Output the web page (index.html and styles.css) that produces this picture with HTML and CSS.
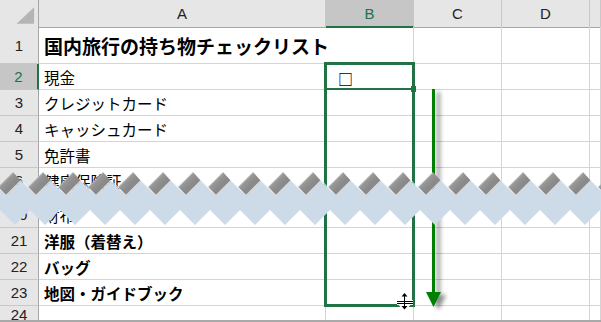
FILE: index.html
```html
<!DOCTYPE html>
<html lang="ja">
<head>
    <meta charset="UTF-8">
    <meta name="viewport" content="width=device-width, initial-scale=1.0">
    <title>国内旅行の持ち物チェックリスト</title>
    <link rel="stylesheet" href="styles.css">
</head>
<body>

    <!-- シート本体 -->
    <div class="sheet">
        <div class="row head">
            <div class="corner">
                <svg width="39" height="27" viewBox="0 0 39 27"><polygon points="35,7 35,24 17,24" fill="#b4b4b4"/></svg>
            </div>
            <div class="colhead">A</div>
            <div class="colhead sel">B</div>
            <div class="colhead">C</div>
            <div class="colhead">D</div>
            <div class="colhead"></div>
        </div>

        <div class="row r1">
            <div class="num">1</div>
            <div class="cell title">国内旅行の持ち物チェックリスト</div>
            <div class="cell"></div><div class="cell"></div><div class="cell"></div><div class="cell"></div>
        </div>
        <div class="row">
            <div class="num sel">2</div>
            <div class="cell">現金</div>
            <div class="cell check">□</div><div class="cell"></div><div class="cell"></div><div class="cell"></div>
        </div>
        <div class="row">
            <div class="num">3</div>
            <div class="cell">クレジットカード</div>
            <div class="cell"></div><div class="cell"></div><div class="cell"></div><div class="cell"></div>
        </div>
        <div class="row">
            <div class="num">4</div>
            <div class="cell">キャッシュカード</div>
            <div class="cell"></div><div class="cell"></div><div class="cell"></div><div class="cell"></div>
        </div>
        <div class="row">
            <div class="num">5</div>
            <div class="cell">免許書</div>
            <div class="cell"></div><div class="cell"></div><div class="cell"></div><div class="cell"></div>
        </div>
        <div class="row">
            <div class="num">6</div>
            <div class="cell">健康保険証</div>
            <div class="cell"></div><div class="cell"></div><div class="cell"></div><div class="cell"></div>
        </div>
        <div class="skip"></div>
        <div class="row">
            <div class="num">20</div>
            <div class="cell">財布</div>
            <div class="cell"></div><div class="cell"></div><div class="cell"></div><div class="cell"></div>
        </div>
        <div class="row bold">
            <div class="num">21</div>
            <div class="cell">洋服（着替え）</div>
            <div class="cell"></div><div class="cell"></div><div class="cell"></div><div class="cell"></div>
        </div>
        <div class="row bold">
            <div class="num">22</div>
            <div class="cell">バッグ</div>
            <div class="cell"></div><div class="cell"></div><div class="cell"></div><div class="cell"></div>
        </div>
        <div class="row bold">
            <div class="num">23</div>
            <div class="cell">地図・ガイドブック</div>
            <div class="cell"></div><div class="cell"></div><div class="cell"></div><div class="cell"></div>
        </div>
        <div class="row last">
            <div class="num">24</div>
            <div class="cell"></div>
            <div class="cell"></div><div class="cell"></div><div class="cell"></div><div class="cell"></div>
        </div>

        <!-- 選択範囲 B2:B23 -->
        <div class="selection"></div>
        <div class="active-line"></div>
        <div class="fill-handle"></div>

        <!-- 下向きの矢印 -->
        <svg class="arrow" width="40" height="230" viewBox="420 85 40 230">
            <defs>
                <filter id="shadow" x="-50%" y="-5%" width="200%" height="110%">
                    <feDropShadow dx="5" dy="3" stdDeviation="2" flood-color="#000" flood-opacity="0.45"/>
                </filter>
            </defs>
            <g filter="url(#shadow)" fill="#008000">
                <rect x="432" y="89" width="3" height="204"/>
                <polygon points="426,292 441,292 433.5,307"/>
            </g>
        </svg>

        <!-- マウスカーソル -->
        <svg class="cursor" width="18" height="18" viewBox="396 292 18 18">
            <g stroke="#fff" stroke-width="3" fill="#fff">
                <path d="M397 301.5H413M397 303.5H413M404.5 295V307"/>
                <polygon points="404.5,293 401.5,296.5 407.5,296.5"/>
                <polygon points="404.5,309.5 401.5,306 407.5,306"/>
            </g>
            <g stroke="#000" stroke-width="1" fill="#000">
                <path d="M397 301.5H413M397 303.5H413M404.5 295V307" fill="none"/>
                <polygon points="404.5,293 401.5,296.5 407.5,296.5" stroke="none"/>
                <polygon points="404.5,309.5 401.5,306 407.5,306" stroke="none"/>
            </g>
        </svg>

        <!-- 省略部分のギザギザ -->
        <svg class="tear" width="601" height="65" viewBox="0 165 601 65">
            <defs>
                <linearGradient id="tooth" gradientUnits="userSpaceOnUse" x1="12" y1="15" x2="20.5" y2="23.5">
                    <stop offset="0" stop-color="#b8b8b8"/>
                    <stop offset="0.15" stop-color="#979797"/>
                    <stop offset="0.7" stop-color="#888888"/>
                    <stop offset="1" stop-color="#8e8e8e"/>
                </linearGradient>
                <pattern id="zigzag" patternUnits="userSpaceOnUse" x="-7" y="165" width="30" height="65">
                    <polygon points="5,22 20,7 28,16 13,31" fill="url(#tooth)"/>
                    <polyline points="0,17.4 13,30.4 28,15.4 30,17.4" fill="none" stroke="#f2f2f2" stroke-width="1"/>
                    <polygon points="0,18 13,31 28,16 30,18 30,52 22,60 7,45 0,52" fill="#cddbe8"/>
                </pattern>
            </defs>
            <rect x="0" y="165" width="601" height="65" fill="url(#zigzag)"/>
        </svg>
    </div>

</body>
</html>
```

FILE: styles.css
```css
body {
    margin: 0;
    background-color: #ffffff;
    font-family: "Noto Sans CJK JP", sans-serif;
}
.sheet {
    position: relative;
    width: 601px;
    height: 322px;
    overflow: hidden;
    border-bottom: 2px solid #a9a9a9;
    box-sizing: border-box;
}
.row {
    display: grid;
    grid-template-columns: 39px 287px 88px 88px 88px 11px;
    height: 26px;
}
.row > div {
    box-sizing: border-box;
    white-space: nowrap;
    display: flex;
    align-items: center;
}
.head {
    height: 27px;
    background-color: #e6e6e6;
}
.r1 {
    height: 37px;
}
.last {
    height: 14px;
}
.skip {
    height: 8px;
}

/* 見出し */
.corner {
    border-right: 1px solid #a5a5a5;
    border-bottom: 1px solid #a5a5a5;
}
.colhead {
    justify-content: center;
    font-family: "Liberation Sans", sans-serif;
    font-size: 15px;
    color: #222;
    border-right: 1px solid #c8c8c8;
    border-bottom: 1px solid #a5a5a5;
}
.colhead.sel {
    background-color: #c6c6c6;
    color: #217346;
    border-bottom: 2px solid #217346;
}
.num {
    justify-content: center;
    background-color: #e6e6e6;
    font-family: "Liberation Sans", sans-serif;
    font-size: 15px;
    color: #222;
    border-right: 1px solid #a5a5a5;
    border-bottom: 1px solid #c8c8c8;
}
.num.sel {
    background-color: #c6c6c6;
    color: #217346;
    border-right: 2px solid #217346;
}

/* セル */
.cell {
    padding-left: 5px;
    font-size: 15.5px;
    color: #000;
    border-right: 1px solid #d4d4d4;
    border-bottom: 1px solid #d4d4d4;
}
.title {
    font-size: 19px;
    font-weight: 700;
    border-right-color: transparent !important;
    overflow: visible;
}
.bold .cell {
    font-weight: 700;
}
.check {
    padding-left: 12px;
    padding-top: 3px;
    font-size: 15px;
    font-weight: 700;
}

/* 選択範囲 */
.selection {
    position: absolute;
    left: 324px;
    top: 62px;
    width: 91px;
    height: 245px;
    border: 3px solid #217346;
    box-sizing: border-box;
}
.active-line {
    position: absolute;
    left: 324px;
    top: 88px;
    width: 88px;
    height: 2px;
    background-color: #217346;
}
.fill-handle {
    position: absolute;
    left: 411px;
    top: 86px;
    width: 5px;
    height: 6px;
    background-color: #217346;
}
.arrow {
    position: absolute;
    left: 420px;
    top: 85px;
}
.cursor {
    position: absolute;
    left: 396px;
    top: 292px;
}
.tear {
    position: absolute;
    left: 0;
    top: 165px;
}
```
